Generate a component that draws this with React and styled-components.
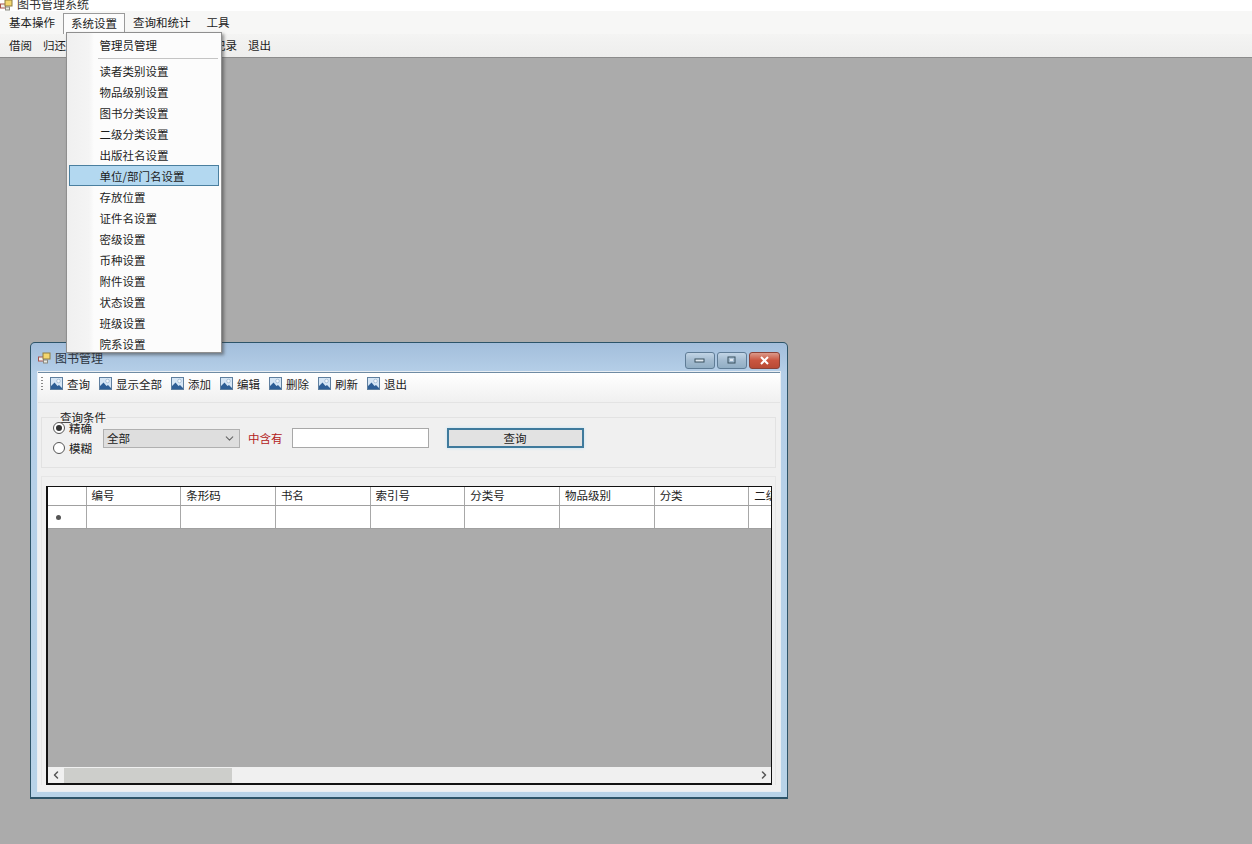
import React from "react";
import styled, { createGlobalStyle } from "styled-components";
import { ChevronDown, ChevronLeft, ChevronRight } from "lucide-react";

const GlobalStyle = createGlobalStyle`
  html, body { margin: 0; padding: 0; height: 100%; overflow: hidden; }
  body {
    background: #ababab;
    color: #1c1c1c;
    font-family: "Noto Sans CJK SC", "Liberation Sans", sans-serif;
    font-size: 11.5px;
    line-height: 16px;
  }
`;

const Page = styled.div`
  position: relative;
  width: 1252px;
  height: 844px;
  overflow: hidden;
  background: #ababab;
`;

/* main form chrome */
const AppTitle = styled.div`
  display: flex;
  align-items: flex-end;
  gap: 4px;
  height: 11px;
  padding-left: 0;
  background: #fff;
  overflow: hidden;
  font-size: 12px;
  line-height: 14px;
  color: #333;
`;

const MenuBar = styled.div`
  display: flex;
  height: 23px;
  padding-left: 1px;
  background: #f7f7f6;
  box-sizing: border-box;
`;

const MenuTitle = styled.div`
  box-sizing: border-box;
  height: ${p => (p.$open ? "21px" : "23px")};
  margin-top: ${p => (p.$open ? "2px" : "0")};
  padding: ${p => (p.$open ? "1px 7px 0" : "3px 8px 0")};
  border: ${p => (p.$open ? "1px solid #9a9a9a" : "none")};
  border-bottom: none;
  background: ${p => (p.$open ? "#fcfcfc" : "transparent")};
`;

const QuickBar = styled.div`
  display: flex;
  gap: 11px;
  height: 24px;
  padding: 3px 0 0 9px;
  box-sizing: border-box;
  background: linear-gradient(#f4f4f3, #eeeeed);
  border-bottom: 1px solid #8c8c8c;
`;

/* dropdown of 系统设置 */
const Dropdown = styled.div`
  position: absolute;
  left: 66px;
  top: 32px;
  width: 156px;
  height: 321px;
  box-sizing: border-box;
  padding: 1px 2px;
  background: linear-gradient(90deg, #f0f0f0 0, #f4f4f4 22px, #fcfcfc 27px, #fcfcfc 100%);
  border: 1px solid #8f8f8f;
  box-shadow: 2px 2px 3px rgba(60, 60, 60, 0.55);
  z-index: 5;
`;

const DropItem = styled.div`
  box-sizing: border-box;
  height: 21px;
  padding: 2px 0 0 30px;
  margin-left: -0.5px;
  border: 1px solid ${p => (p.$active ? "#4a7f9f" : "transparent")};
  background: ${p => (p.$active ? "#b3d8f0" : "transparent")};
`;

const DropSeparator = styled.div`
  height: 1px;
  margin: 3px 1px 1px 29px;
  background: #c4c4c4;
`;

/* child window */
const ChildWindow = styled.div`
  position: absolute;
  left: 30px;
  top: 342px;
  width: 758px;
  height: 457px;
  box-sizing: border-box;
  display: flex;
  flex-direction: column;
  padding: 0 7px 6px;
  background: linear-gradient(#a3bedb 0, #b5cfe8 30px, #b8d3e8 100%);
  border: 1px solid #2d5468;
  border-bottom-width: 2px;
  border-radius: 5px 5px 0 0;
`;

const TitleBar = styled.div`
  display: flex;
  align-items: center;
  flex: none;
  height: 29px;
  font-size: 12px;
  color: #2b3440;
`;

const TitleText = styled.span`
  margin-left: 4px;
  flex: 1;
`;

const WinButton = styled.div`
  display: flex;
  align-items: center;
  justify-content: center;
  box-sizing: border-box;
  width: ${p => (p.$close ? "31px" : "30px")};
  height: 17px;
  margin-left: 2px;
  margin-top: 6px;
  border: 1px solid ${p => (p.$close ? "#8a4238" : "#5f7c96")};
  border-radius: 3px;
  background: ${p =>
    p.$close
      ? "linear-gradient(#dc9a8a, #c9553f 50%, #b84a35)"
      : "linear-gradient(#c2d5e6, #a3bbd0 50%, #91aec4)"};
`;

const Client = styled.div`
  flex: 1;
  display: flex;
  flex-direction: column;
  min-height: 0;
  background: #f0f0f0;
  border-top: 1px solid #6f8ba3;
  box-shadow: 0 0 0 1px #e9eef3;
`;

const ToolBar = styled.div`
  display: flex;
  align-items: center;
  flex: none;
  height: 30px;
  box-sizing: border-box;
  padding: 0 0 8px 3px;
  background: linear-gradient(#ffffff, #f0f0f0);
  border-bottom: 1px solid #e3e3e3;
`;

const Grip = styled.div`
  width: 2px;
  height: 14px;
  margin-right: 7px;
  background: repeating-linear-gradient(#8a8a8a 0 1px, transparent 1px 3px);
`;

const ToolItem = styled.div`
  display: flex;
  align-items: center;
  gap: 4px;
  margin-right: 9px;
`;

const QueryGroup = styled.fieldset`
  flex: none;
  box-sizing: border-box;
  height: 57px;
  margin: 8px 4px 0 3px;
  padding: 0 0 0 11px;
  border: 1px solid #e2e2e2;
  display: flex;
  align-items: center;
  min-width: 0;
`;

const Legend = styled.legend`
  margin-left: 6px;
  padding: 0 1px;
  line-height: 13px;
`;

const RadioColumn = styled.div`
  display: flex;
  flex-direction: column;
  gap: 4px;
  width: 50px;
  margin-top: -4px;
`;

const RadioRow = styled.div`
  display: flex;
  align-items: center;
  gap: 4px;
`;

const RadioDot = styled.span`
  display: flex;
  align-items: center;
  justify-content: center;
  box-sizing: border-box;
  width: 12px;
  height: 12px;
  border: 1px solid #555;
  border-radius: 50%;
  background: #fff;
  &::after {
    content: "";
    display: ${p => (p.$on ? "block" : "none")};
    width: 6px;
    height: 6px;
    border-radius: 50%;
    background: #333;
  }
`;

const SelectBox = styled.div`
  display: flex;
  align-items: center;
  justify-content: space-between;
  box-sizing: border-box;
  width: 137px;
  height: 19px;
  padding: 0 3px;
  background: #dedede;
  border: 1px solid #b0b0b0;
  margin-top: -4px;
`;

const RedLabel = styled.span`
  margin: -4px 9px 0 8px;
  color: #b32020;
`;

const TextBox = styled.div`
  box-sizing: border-box;
  width: 137px;
  height: 20px;
  background: #fff;
  border: 1px solid #a8a8a8;
  margin-top: -4px;
`;

const QueryButton = styled.div`
  box-sizing: border-box;
  width: 137px;
  height: 20px;
  margin: -4px 0 0 18px;
  text-align: center;
  background: #e2e2e2;
  border: 2px solid #3f7a9c;
  box-shadow: 0 0 3px #bfe3f5;
  line-height: 16px;
`;

const GridPanel = styled.div`
  flex: 1;
  display: flex;
  min-height: 0;
  margin: 8px 4px 6px 3px;
  padding: 9px 3px 0 4px;
  border: 1px solid #e6e6e6;
  border-bottom: none;
`;

const Grid = styled.div`
  flex: 1;
  display: flex;
  flex-direction: column;
  min-width: 0;
  background: #ababab;
  border: 1px solid #111;
  border-width: 1px 1px 2px 2px;
`;

const GridRow = styled.div`
  display: grid;
  grid-template-columns: 38.5px repeat(7, 94.7px) 1fr;
  height: ${p => p.$h}px;
  flex: none;
  background: #fff;
  overflow: hidden;
  border-bottom: 1px solid #a0a0a0;
`;

const GridCell = styled.div`
  box-sizing: border-box;
  padding-left: 5px;
  white-space: nowrap;
  overflow: hidden;
  border-right: 1px solid #a8a8a8;
  &:last-child { border-right: none; }
`;

const NewRowMark = styled(GridCell)`
  display: flex;
  align-items: center;
  padding-left: 8px;
  &::after {
    content: "";
    width: 5px;
    height: 5px;
    border-radius: 50%;
    background: #555;
  }
`;

const GridBody = styled.div`
  flex: 1;
`;

const ScrollBar = styled.div`
  display: flex;
  align-items: center;
  justify-content: space-between;
  flex: none;
  height: 16px;
  background: #f0f0f0;
`;

const ScrollThumb = styled.div`
  width: 168px;
  height: 15px;
  margin-left: 1px;
  background: #cdcecb;
`;

const ScrollArrow = styled.div`
  display: flex;
  align-items: center;
  justify-content: center;
  width: 15px;
  color: #555;
`;

const ScrollTrack = styled.div`
  flex: 1;
`;

const PictureIcon = () => (
  <svg width="13" height="13" viewBox="0 0 13 13">
    <rect x="0.5" y="0.5" width="12" height="12" fill="#d6e6f5" stroke="#5f7f9f" />
    <circle cx="8.5" cy="4" r="1.8" fill="#f4f8fc" stroke="#7f9dbd" strokeWidth="0.5" />
    <path d="M1 12 L1 9 L4.5 5.5 L7.5 9 L9 8 L12 11 L12 12 Z" fill="#2f5f96" />
  </svg>
);

const FormIcon = () => (
  <svg width="13" height="12" viewBox="0 0 13 12">
    <rect x="0.5" y="5" width="5" height="4" fill="#f2f2ee" stroke="#a8524a" />
    <rect x="5" y="1" width="7" height="6" fill="#f3d66e" stroke="#8f7c3e" />
    <rect x="5.5" y="8" width="4" height="3" fill="#e9e9e2" stroke="#8a8a80" />
  </svg>
);

const menus = ["基本操作", "系统设置", "查询和统计", "工具"];
// 中间几项被下拉菜单盖住
const quickItems = ["借阅", "归还", "丢失赔偿", "过期查询", "借阅记录", "退出"];
const dropItems = [
  "读者类别设置", "物品级别设置", "图书分类设置", "二级分类设置", "出版社名设置",
  "单位/部门名设置", "存放位置", "证件名设置", "密级设置", "币种设置",
  "附件设置", "状态设置", "班级设置", "院系设置",
];
const tools = ["查询", "显示全部", "添加", "编辑", "删除", "刷新", "退出"];
const columns = ["编号", "条形码", "书名", "索引号", "分类号", "物品级别", "分类", "二级分类"];

export default function App() {
  return (
    <Page>
      <GlobalStyle />
      <AppTitle>
        <FormIcon />
        <span>图书管理系统</span>
      </AppTitle>
      <MenuBar>
        {menus.map(m => (
          <MenuTitle key={m} $open={m === "系统设置"}>{m}</MenuTitle>
        ))}
      </MenuBar>
      <QuickBar>
        {quickItems.map(q => <span key={q}>{q}</span>)}
      </QuickBar>

      <Dropdown>
        <DropItem>管理员管理</DropItem>
        <DropSeparator />
        {dropItems.map(d => (
          <DropItem key={d} $active={d === "单位/部门名设置"}>{d}</DropItem>
        ))}
      </Dropdown>

      <ChildWindow>
        <TitleBar>
          <FormIcon />
          <TitleText>图书管理</TitleText>
          <WinButton>
            <svg width="12" height="6" viewBox="0 0 12 6"><rect x="1" y="1" width="9" height="3" fill="#dfe8f0" stroke="#39505f" /></svg>
          </WinButton>
          <WinButton>
            <svg width="10" height="9" viewBox="0 0 10 9"><rect x="1" y="1" width="7" height="6" fill="none" stroke="#39505f" /><rect x="3" y="3" width="3" height="2" fill="#dfe8f0" /></svg>
          </WinButton>
          <WinButton $close>
            <svg width="11" height="9" viewBox="0 0 11 9"><path d="M2 1 L9 8 M9 1 L2 8" stroke="#fff" strokeWidth="2" /></svg>
          </WinButton>
        </TitleBar>
        <Client>
          <ToolBar>
            <Grip />
            {tools.map(t => (
              <ToolItem key={t}>
                <PictureIcon />
                <span>{t}</span>
              </ToolItem>
            ))}
          </ToolBar>
          <QueryGroup>
            <Legend>查询条件</Legend>
            <RadioColumn>
              <RadioRow><RadioDot $on />精确</RadioRow>
              <RadioRow><RadioDot />模糊</RadioRow>
            </RadioColumn>
            <SelectBox>
              全部
              <ChevronDown size={13} color="#666" />
            </SelectBox>
            <RedLabel>中含有</RedLabel>
            <TextBox />
            <QueryButton>查询</QueryButton>
          </QueryGroup>
          <GridPanel>
            <Grid>
              <GridRow $h={18}>
                <GridCell />
                {columns.map(c => <GridCell key={c}>{c}</GridCell>)}
              </GridRow>
              <GridRow $h={22}>
                <NewRowMark />
                {columns.map(c => <GridCell key={c} />)}
              </GridRow>
              <GridBody />
              <ScrollBar>
                <ScrollArrow><ChevronLeft size={12} strokeWidth={3} /></ScrollArrow>
                <ScrollThumb />
                <ScrollTrack />
                <ScrollArrow><ChevronRight size={12} strokeWidth={3} /></ScrollArrow>
              </ScrollBar>
            </Grid>
          </GridPanel>
        </Client>
      </ChildWindow>
    </Page>
  );
}
